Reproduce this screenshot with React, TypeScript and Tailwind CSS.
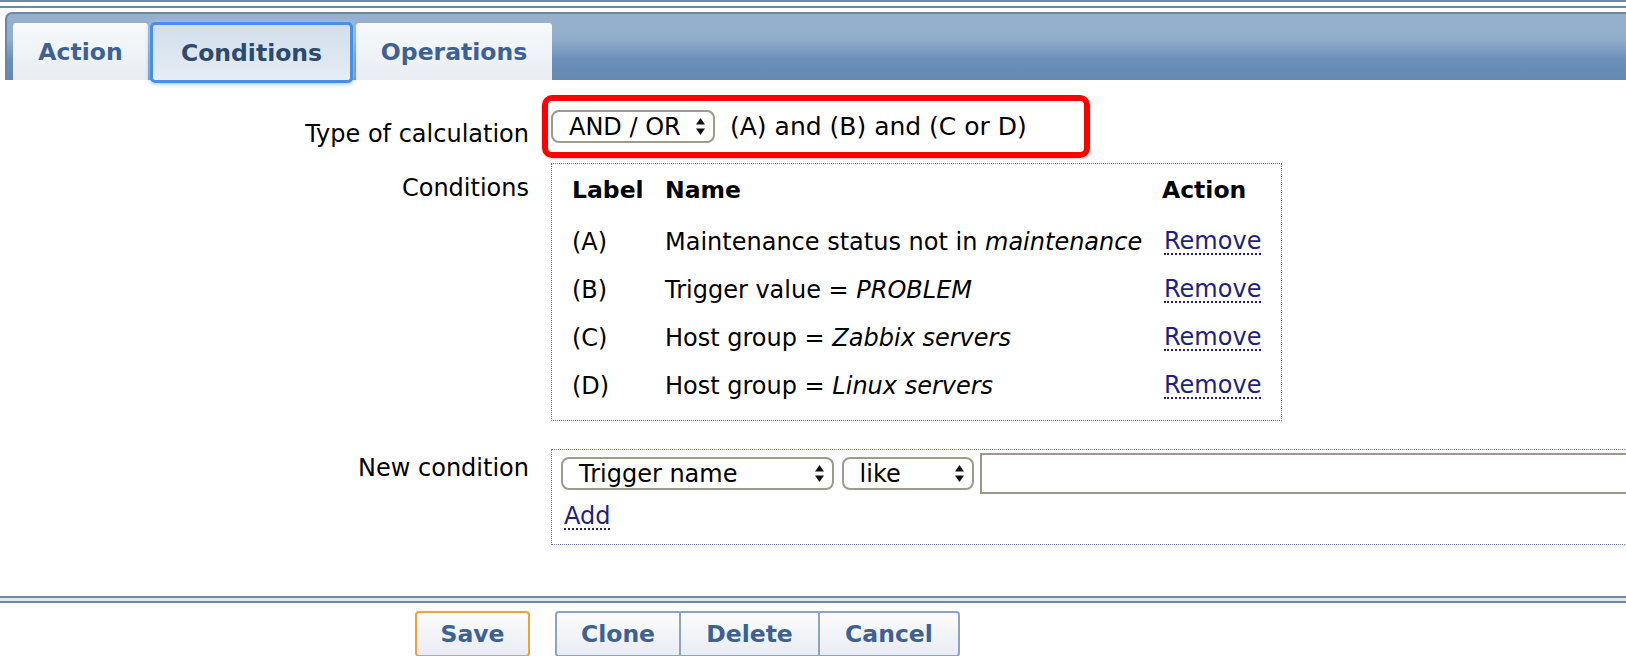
import React from 'react'

/**
 * Action edit form, Conditions tab
 */

interface Condition {
  label: string
  name: string
  value: string
}

const conditions: Condition[] = [
  { label: '(A)', name: 'Maintenance status not in ', value: 'maintenance' },
  { label: '(B)', name: 'Trigger value = ', value: 'PROBLEM' },
  { label: '(C)', name: 'Host group = ', value: 'Zabbix servers' },
  { label: '(D)', name: 'Host group = ', value: 'Linux servers' },
]

function UpDown() {
  return (
    <svg width="11" height="19" viewBox="0 0 11 19" className="shrink-0">
      <path d="M5.5 1 L10 7.5 H1 Z" fill="#111" />
      <path d="M5.5 18 L10 11.5 H1 Z" fill="#111" />
    </svg>
  )
}

function FakeSelect({ text, className }: { text: string; className: string }) {
  return (
    <div
      className={`flex items-center justify-between rounded-[8px] border-2 border-[#9c9c8c] bg-white pl-[16px] pr-[7px] ${className}`}
    >
      <span className="whitespace-nowrap">{text}</span>
      <UpDown />
    </div>
  )
}

export default function App() {
  return (
    <div className="h-[656px] w-[1626px] overflow-hidden bg-white font-['DejaVu_Sans',Verdana,sans-serif] text-[24px] leading-[30px] text-black">
      {/* Top rules */}
      <div className="h-[2px] bg-[#6f88a6]" />
      <div className="mt-[4px] h-[2px] bg-[#6f88a6]" />

      {/* Tab bar */}
      <div className="ml-[5px] mt-[4px] flex h-[68px] items-end gap-[2px] rounded-tl-[7px] border-l-2 border-t-2 border-[#6b86a6] bg-[linear-gradient(to_bottom,#96b0cd_0%,#93aecb_38%,#6b90b9_68%,#6389b3_100%)] pl-[6px] text-[23.5px]">
        <div className="flex h-[57px] w-[135px] items-center justify-center rounded-t-[3px] bg-[linear-gradient(to_bottom,#f7f9fb,#e8edf3)] font-bold text-[#3d6191]">
          Action
        </div>
        <div className="relative z-10 -mb-[3px] flex h-[61px] w-[203px] items-center justify-center rounded-[5px] border-[3px] border-[#4a8fe6] bg-[linear-gradient(to_bottom,#d2deeb,#e6edf5)] font-bold text-[#2d4a6d] shadow-[0_0_4px_1px_#9cc5f4]">
          Conditions
        </div>
        <div className="ml-[1px] flex h-[57px] w-[196px] items-center justify-center rounded-t-[3px] bg-[linear-gradient(to_bottom,#f7f9fb,#e8edf3)] font-bold text-[#3d6191]">
          Operations
        </div>
      </div>

      {/* Type of calculation */}
      <div className="mt-[15px] flex">
        <div className="w-[529px] shrink-0 pt-[24px] text-right">Type of calculation</div>
        <div className="ml-[13px] flex h-[63px] w-[548px] shrink-0 items-center rounded-[10px] border-[6px] border-[#ff0000] pl-[3px] shadow-[0_1px_2px_rgba(0,0,0,0.25)]">
          <FakeSelect text="AND / OR" className="h-[33px] w-[164px]" />
          <span className="ml-[15px] whitespace-nowrap text-[25px]">(A) and (B) and (C or D)</span>
        </div>
      </div>

      {/* Conditions */}
      <div className="mt-[5px] flex">
        <div className="w-[529px] shrink-0 pt-[10px] text-right">Conditions</div>
        <div className="ml-[22px] w-[731px] shrink-0 border border-dotted border-[#6c7ca0] pb-[10px] pl-[20px] pt-[2px]">
          <div className="flex h-[48px] items-center text-[23.5px] font-bold">
            <div className="w-[93px]">Label</div>
            <div className="w-[497px]">Name</div>
            <div>Action</div>
          </div>
          <div className="mt-[4px]">
            {conditions.map((c) => (
              <div key={c.label} className="flex h-[48px] items-center">
                <div className="w-[93px]">{c.label}</div>
                <div className="w-[497px] whitespace-nowrap">
                  {c.name}
                  <i>{c.value}</i>
                </div>
                <div className="ml-[2px] inline-block border-b-2 border-dotted border-[#231f7c] leading-[24px] text-[#231f7c]">
                  Remove
                </div>
              </div>
            ))}
          </div>
        </div>
      </div>

      {/* New condition */}
      <div className="mt-[28px] flex">
        <div className="w-[529px] shrink-0 pt-[4px] text-right">New condition</div>
        <div className="ml-[22px] w-[1200px] shrink-0 border border-dotted border-[#6c7ca0] pb-[13px] pl-[9px] pt-[3px]">
          <div className="flex h-[41px] items-center">
            <FakeSelect text="Trigger name" className="h-[33px] w-[282px]" />
            <FakeSelect text="like" className="ml-[8px] h-[33px] w-[136px]" />
            <div className="ml-[6px] h-[41px] w-[800px] border-2 border-[#9a9a88] bg-white" />
          </div>
          <div className="ml-[3px] mt-[10px] inline-block border-b-2 border-dotted border-[#231f7c] leading-[24px] text-[#231f7c]">
            Add
          </div>
        </div>
      </div>

      {/* Footer separator */}
      <div className="mt-[51px] h-[2px] bg-[#6f88a6]" />
      <div className="h-[3px] bg-[#e0e7f0]" />
      <div className="h-[2px] bg-[#6f88a6]" />

      {/* Buttons */}
      <div className="mt-[8px] flex pl-[415px] text-[23.5px] font-bold text-[#3d6191]">
        <div className="flex h-[46px] w-[115px] items-center justify-center rounded-[4px] border-2 border-[#f0a236] bg-[linear-gradient(to_bottom,#fbfcfd,#e8edf3)]">
          Save
        </div>
        <div className="ml-[25px] flex">
          <div className="flex h-[46px] w-[126px] items-center justify-center rounded-l-[4px] border-2 border-[#8da4c1] bg-[linear-gradient(to_bottom,#fbfcfd,#e8edf3)]">
            Clone
          </div>
          <div className="flex h-[46px] w-[139px] items-center justify-center border-y-2 border-r-2 border-[#8da4c1] bg-[linear-gradient(to_bottom,#fbfcfd,#e8edf3)]">
            Delete
          </div>
          <div className="flex h-[46px] w-[140px] items-center justify-center rounded-r-[4px] border-y-2 border-r-2 border-[#8da4c1] bg-[linear-gradient(to_bottom,#fbfcfd,#e8edf3)]">
            Cancel
          </div>
        </div>
      </div>
    </div>
  )
}
